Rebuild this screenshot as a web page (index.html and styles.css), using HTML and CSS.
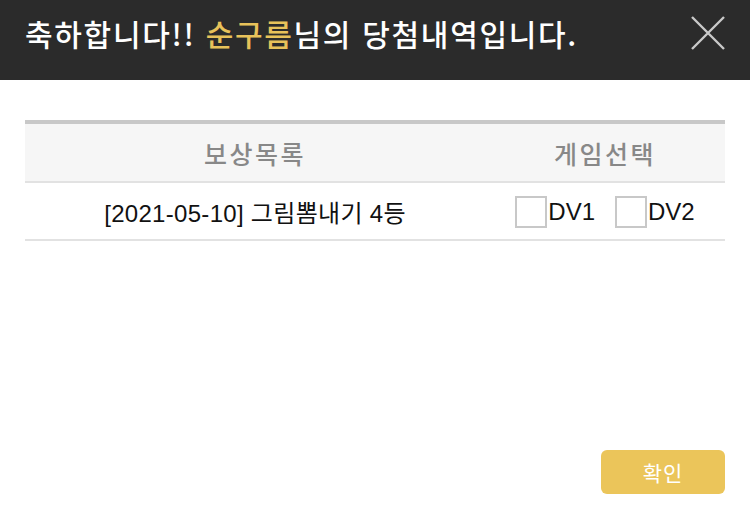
FILE: index.html
```html
<!DOCTYPE html>
<html lang="ko">
<head>
    <meta charset="UTF-8">
    <meta name="viewport" content="width=device-width, initial-scale=1.0">
    <title>당첨내역</title>
    <link rel="stylesheet" href="styles.css">
</head>
<body>
    <div class="popup">
        <div class="popup-head">
            <h1 class="popup-title">축하합니다!! <span class="name">순구름</span>님의 당첨내역입니다.</h1>
            <button class="close-btn" type="button" aria-label="닫기">
                <svg width="34" height="34" viewBox="0 0 34 34">
                    <path d="M1 1 L33 33 M33 1 L1 33" stroke="#c9c9c9" stroke-width="2.4" fill="none"/>
                </svg>
            </button>
        </div>

        <div class="popup-body">
            <table class="prize-table">
                <thead>
                    <tr>
                        <th class="col-prize">보상목록</th>
                        <th class="col-game">게임선택</th>
                    </tr>
                </thead>
                <tbody>
                    <tr>
                        <td class="col-prize">[2021-05-10] 그림뽐내기 4등</td>
                        <td class="col-game">
                            <div class="picks">
                                <label class="pick"><span class="box"></span>DV1</label>
                                <label class="pick"><span class="box"></span>DV2</label>
                            </div>
                        </td>
                    </tr>
                </tbody>
            </table>
        </div>

        <div class="popup-foot">
            <button class="ok-btn" type="button">확인</button>
        </div>
    </div>
</body>
</html>
```

FILE: styles.css
```css
body {
    margin: 0;
    background: #fff;
    font-family: "Noto Sans CJK KR", "Noto Sans", sans-serif;
}
.popup {
    width: 750px;
    height: 518px;
    display: flex;
    flex-direction: column;
}
.popup-head {
    height: 80px;
    box-sizing: border-box;
    background-color: #2b2b2b;
    display: flex;
    align-items: flex-start;
    justify-content: space-between;
    padding: 0 25px;
}
.popup-title {
    margin: 0;
    padding-top: 18px;
    line-height: 1;
    color: #fff;
    font-size: 30px;
    font-weight: 500;
    letter-spacing: 1.7px;
}
.popup-title .name {
    color: #e8c25a;
}
.close-btn {
    background: none;
    border: none;
    padding: 0;
    width: 34px;
    height: 34px;
    margin-top: 16px;
    cursor: pointer;
}
.close-btn svg {
    display: block;
}
.popup-body {
    flex: 1;
    padding: 40px 25px 0;
}
.prize-table {
    width: 100%;
    border-collapse: collapse;
    border-top: 4px solid #c8c8c8;
}
.prize-table th {
    height: 57px;
    background-color: #f6f6f6;
    color: #888;
    font-size: 25px;
    font-weight: 500;
    letter-spacing: 2.5px;
    border-bottom: 2px solid #e2e2e2;
    padding: 0;
}
.prize-table td {
    height: 56px;
    border-bottom: 2px solid #e2e2e2;
    padding: 0;
    text-align: center;
    font-family: "Liberation Sans", "Noto Sans CJK KR", sans-serif;
    font-size: 24px;
    letter-spacing: 0.3px;
    color: #111;
}
.col-prize {
    width: 460px;
}
.picks {
    display: flex;
    justify-content: center;
    gap: 20px;
    padding-top: 1px;
}
.pick {
    display: flex;
    align-items: center;
    font-family: "Liberation Sans", sans-serif;
    font-size: 24px;
    letter-spacing: 0;
}
.box {
    width: 28px;
    height: 28px;
    border: 2px solid #c8c8c8;
    margin-right: 1px;
}
.popup-foot {
    display: flex;
    justify-content: flex-end;
    padding: 0 25px 24px;
}
.ok-btn {
    width: 124px;
    height: 44px;
    background-color: #ebc55a;
    border: none;
    border-radius: 6px;
    color: #fff;
    font-family: "Noto Sans CJK KR", sans-serif;
    font-size: 21px;
    letter-spacing: 1px;
    cursor: pointer;
}
```
